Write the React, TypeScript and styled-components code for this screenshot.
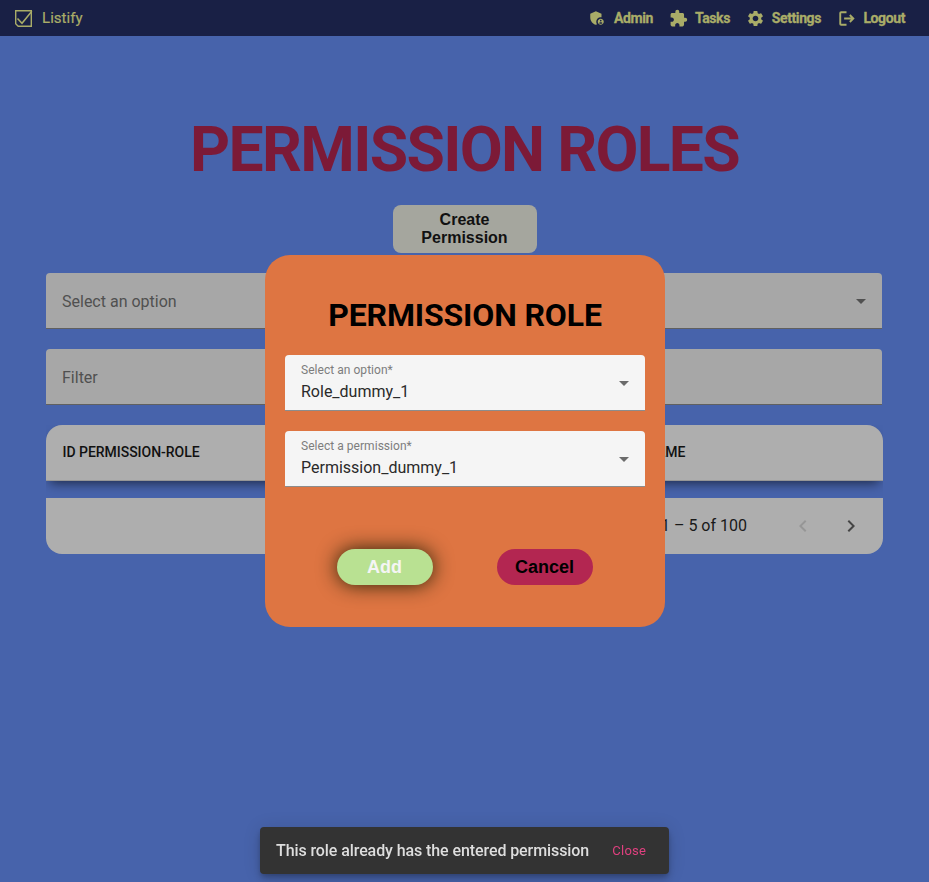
import React from "react";
import styled, { createGlobalStyle } from "styled-components";
import {
  MdAdminPanelSettings,
  MdExtension,
  MdSettings,
  MdArrowDropDown,
  MdChevronLeft,
  MdChevronRight,
} from "react-icons/md";

const GlobalStyle = createGlobalStyle`
  * { box-sizing: border-box; }
  body {
    margin: 0;
    background: #4763ab;
    font-family: Roboto, "Liberation Sans", sans-serif;
  }
`;

const Page = styled.div`
  height: 882px;
  overflow: hidden;
  background: #4763ab;
`;

const NavBar = styled.nav`
  height: 36px;
  padding: 0 24px 0 15px;
  display: flex;
  align-items: center;
  justify-content: space-between;
  background: #192045;
  color: #a9ac68;
`;

const Brand = styled.div`
  display: flex;
  align-items: center;
  gap: 9px;
  font-size: 15px;
  font-weight: 400;
  letter-spacing: 0.05px;
  -webkit-text-stroke: 0.2px #a9ac68;

  svg {
    margin-top: 1px;
  }
`;

const NavLinks = styled.div`
  display: flex;
  align-items: center;
`;

const NavLink = styled.a<{ $width: number }>`
  width: ${(p) => p.$width}px;
  display: flex;
  align-items: center;
  justify-content: space-between;
  margin-left: 16px;
  font-size: 14px;
  font-weight: 700;
  letter-spacing: -0.4px;
  white-space: nowrap;
  -webkit-text-stroke: 0.3px #a9ac68;

  svg {
    flex: none;
  }
`;

const Content = styled.main`
  display: flex;
  flex-direction: column;
  align-items: center;
`;

const PageTitle = styled.h1`
  margin: 76px 0 0;
  height: 75px;
  line-height: 75px;
  font-size: 62.4px;
  font-weight: 700;
  letter-spacing: -1.7px;
  color: #7c1a37;
  white-space: nowrap;
`;

const CreateButton = styled.button`
  width: 144px;
  height: 48px;
  margin: 18px 0 20px;
  padding: 0 20px;
  border: 0;
  border-radius: 8px;
  background: #a5a69e;
  color: #111;
  font: 700 16px/18px "Liberation Sans", sans-serif;
`;

const FieldStack = styled.div`
  width: 836px;
  margin-right: 1px;
  display: flex;
  flex-direction: column;
  gap: 20px;
`;

const OuterField = styled.div`
  height: 56px;
  padding: 1px 9px 0 16px;
  display: flex;
  align-items: center;
  justify-content: space-between;
  border-radius: 4px 4px 0 0;
  border-bottom: 1px solid #606060;
  background: #a7a7a7;
  color: #505050;
  font-size: 16px;
`;

const TableFrame = styled.section`
  width: 837px;
  margin-top: 20px;
  overflow: hidden;
`;

const TableHead = styled.div`
  height: 56px;
  display: grid;
  grid-template-columns: 583.5px 1fr;
  align-items: center;
  padding: 0 16px 2px 16.5px;
  border-radius: 16px 16px 0 0;
  border-bottom: 1px solid #969696;
  background: #aeaeae;
  box-shadow: 0 6px 12px -4px rgba(0, 0, 0, 0.6);
  color: #111;
  font-size: 14px;
  font-weight: 500;
  letter-spacing: -0.03px;
`;

const Paginator = styled.div`
  position: relative;
  height: 56px;
  margin-top: 17px;
  padding-right: 8px;
  display: flex;
  align-items: center;
  justify-content: flex-end;
  border-radius: 0 0 16px 16px;
  background: #aeaeae;
  color: #191919;
  font-size: 16px;
`;

const RangeLabel = styled.span`
  margin-right: 32px;
  padding-bottom: 2px;
`;

const PageArrow = styled.span<{ $disabled?: boolean }>`
  width: 48px;
  display: flex;
  justify-content: center;
  color: ${(p) => (p.$disabled ? "#969696" : "#454545")};
`;

const Backdrop = styled.div`
  position: fixed;
  inset: 0;
  display: flex;
  align-items: center;
  justify-content: center;
`;

const Dialog = styled.div`
  width: 400px;
  height: 372px;
  margin-right: -1px;
  padding: 0 20px;
  display: flex;
  flex-direction: column;
  border-radius: 25px;
  background: #de7542;
`;

const DialogTitle = styled.h2`
  margin: 40px 0 20px;
  line-height: 40px;
  text-align: center;
  font-size: 32px;
  font-weight: 700;
  letter-spacing: -0.15px;
  color: #000;
  white-space: nowrap;
`;

const SelectField = styled.div`
  height: 56px;
  margin-bottom: 20px;
  padding: 0 9px 0 16px;
  display: flex;
  align-items: center;
  justify-content: space-between;
  border-radius: 4px 4px 0 0;
  border-bottom: 1px solid #8c8c8c;
  background: #f5f5f5;
  color: #6b6b6b;
`;

const SelectText = styled.div`
  display: flex;
  flex-direction: column;
`;

const SelectLabel = styled.span`
  height: 18px;
  line-height: 16px;
  font-size: 12px;
  letter-spacing: 0.04px;
  color: #7d7d7d;
`;

const SelectValue = styled.span`
  height: 24px;
  line-height: 24px;
  font-size: 16px;
  color: #2a2a2a;
`;

const DialogActions = styled.div`
  margin-top: 42px;
  padding: 0 52px;
  display: flex;
  justify-content: space-between;
`;

const ActionButton = styled.button<{ $primary?: boolean }>`
  width: 96px;
  height: 36px;
  padding: 0 1px 0 0;
  border: 0;
  border-radius: 18px;
  font: 700 18px "Liberation Sans", sans-serif;
  background: ${(p) => (p.$primary ? "#b9e192" : "#b32651")};
  color: ${(p) => (p.$primary ? "#f5f5f5" : "#000")};
  box-shadow: ${(p) => (p.$primary ? "0 0 20px rgba(20, 24, 0, 0.9)" : "none")};
`;

const Snackbar = styled.div`
  position: fixed;
  left: 260px;
  bottom: 8px;
  width: 409px;
  height: 47px;
  padding: 0 23px 0 16px;
  display: flex;
  align-items: center;
  justify-content: space-between;
  border-radius: 4px;
  background: #333;
  color: #dedede;
  font-size: 16px;
  font-weight: 500;
  letter-spacing: -0.09px;
  white-space: nowrap;
  box-shadow: 0 3px 5px -1px rgba(0, 0, 0, 0.2), 0 6px 10px rgba(0, 0, 0, 0.14),
    0 1px 18px rgba(0, 0, 0, 0.12);
`;

const CloseAction = styled.span`
  font-size: 13px;
  font-weight: 400;
  letter-spacing: 0.2px;
  color: #e0407f;
`;

const BrandMark = () => (
  <svg width="18" height="18" viewBox="0 0 18 18" fill="none" stroke="currentColor">
    <path d="M.7 .7H16.3V16.3H3.2L.7 13.8Z" strokeWidth="1.4" />
    <path d="M2.5 8.5L7 13.3L16.8 1.2" strokeWidth="1.5" />
  </svg>
);

const LogoutIcon = () => (
  <svg width="19" height="19" viewBox="0 0 24 24" fill="none" stroke="currentColor" strokeWidth="2.4">
    <path d="M12 4.1H5.2Q4.1 4.1 4.1 5.2V18.8Q4.1 19.9 5.2 19.9H12" />
    <path d="M9 12H20M16.2 7.6L20.6 12L16.2 16.4" />
  </svg>
);

const selects = [
  { label: "Select an option*", value: "Role_dummy_1" },
  { label: "Select a permission*", value: "Permission_dummy_1" },
];

export default function App() {
  return (
    <Page>
      <GlobalStyle />
      <NavBar>
        <Brand>
          <BrandMark />
          Listify
        </Brand>
        <NavLinks>
          <NavLink $width={65}><MdAdminPanelSettings size={18} />Admin</NavLink>
          <NavLink $width={61}><MdExtension size={19} />Tasks</NavLink>
          <NavLink $width={75}><MdSettings size={19} />Settings</NavLink>
          <NavLink $width={68}><LogoutIcon />Logout</NavLink>
        </NavLinks>
      </NavBar>
      <Content>
        <PageTitle>PERMISSION ROLES</PageTitle>
        <CreateButton>Create Permission</CreateButton>
        <FieldStack>
          <OuterField>
            Select an option
            <MdArrowDropDown size={24} />
          </OuterField>
          <OuterField>Filter</OuterField>
        </FieldStack>
        <TableFrame>
          <TableHead>
            <span>ID PERMISSION-ROLE</span>
            <span>NAME</span>
          </TableHead>
          <Paginator>
            <RangeLabel>1 – 5 of 100</RangeLabel>
            <PageArrow $disabled><MdChevronLeft size={24} /></PageArrow>
            <PageArrow><MdChevronRight size={24} /></PageArrow>
          </Paginator>
        </TableFrame>
      </Content>
      <Backdrop>
        <Dialog>
          <DialogTitle>PERMISSION ROLE</DialogTitle>
          {selects.map((s) => (
            <SelectField key={s.label}>
              <SelectText>
                <SelectLabel>{s.label}</SelectLabel>
                <SelectValue>{s.value}</SelectValue>
              </SelectText>
              <MdArrowDropDown size={24} />
            </SelectField>
          ))}
          <DialogActions>
            <ActionButton $primary>Add</ActionButton>
            <ActionButton>Cancel</ActionButton>
          </DialogActions>
        </Dialog>
      </Backdrop>
      <Snackbar>
        This role already has the entered permission
        <CloseAction>Close</CloseAction>
      </Snackbar>
    </Page>
  );
}
